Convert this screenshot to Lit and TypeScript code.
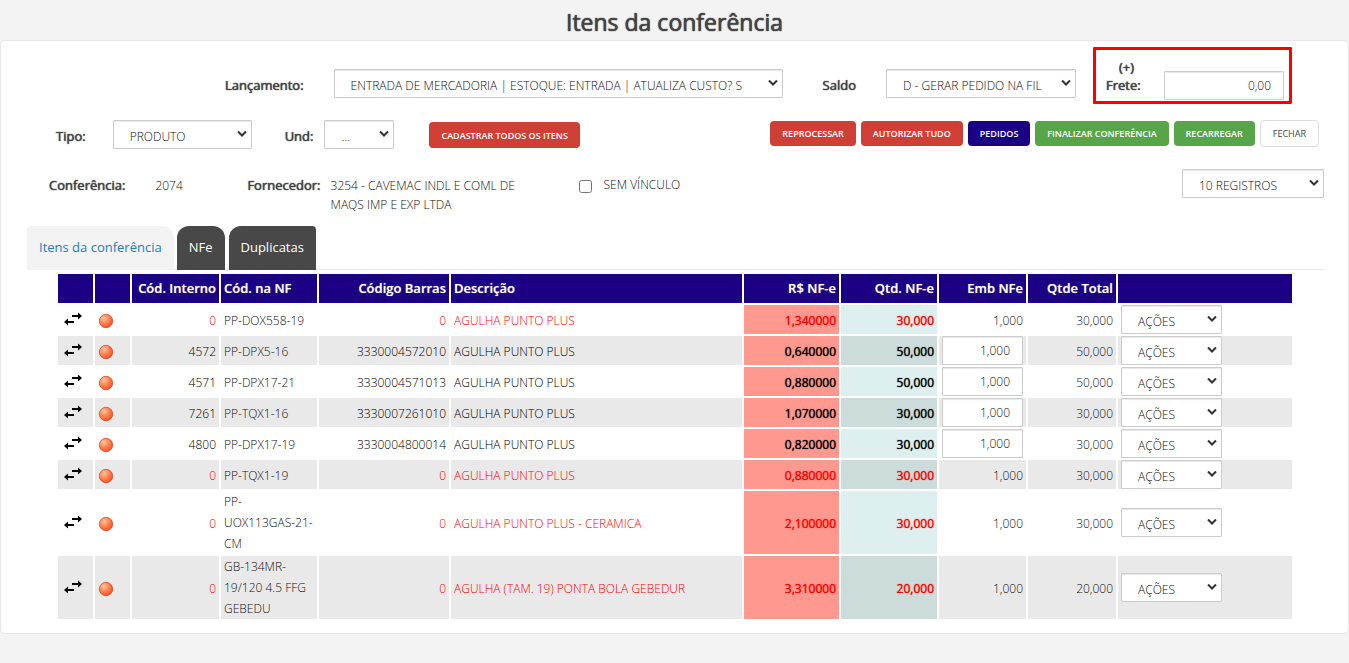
import { LitElement, html, css, svg } from "lit";
import { customElement } from "lit/decorators.js";
import { classMap } from "lit/directives/class-map.js";

interface Item {
  code: string;
  ref: string;
  barcode: string;
  name: string;
  price: string;
  qty: string;
  pack: string;
  editable: boolean;
  total: string;
}

const item = (
  code: string, ref: string, barcode: string, name: string,
  price: string, qty: string, editable = false,
): Item => ({ code, ref, barcode, name, price, qty, pack: "1,000", editable, total: qty });

const ITEMS: Item[] = [
  item("0", "PP-DOX558-19", "0", "AGULHA PUNTO PLUS", "1,340000", "30,000"),
  item("4572", "PP-DPX5-16", "3330004572010", "AGULHA PUNTO PLUS", "0,640000", "50,000", true),
  item("4571", "PP-DPX17-21", "3330004571013", "AGULHA PUNTO PLUS", "0,880000", "50,000", true),
  item("7261", "PP-TQX1-16", "3330007261010", "AGULHA PUNTO PLUS", "1,070000", "30,000", true),
  item("4800", "PP-DPX17-19", "3330004800014", "AGULHA PUNTO PLUS", "0,820000", "30,000", true),
  item("0", "PP-TQX1-19", "0", "AGULHA PUNTO PLUS", "0,880000", "30,000"),
  item("0", "PP-\nUOX113GAS-21-\nCM", "0", "AGULHA PUNTO PLUS - CERAMICA", "2,100000", "30,000"),
  item("0", "GB-134MR-\n19/120 4.5 FFG\nGEBEDU", "0", "AGULHA (TAM. 19) PONTA BOLA GEBEDUR", "3,310000", "20,000"),
];

@customElement("app-root")
export class AppRoot extends LitElement {
  static styles = css`
    :host {
      display: block;
      min-height: 100vh;
      background: #f3f3f3;
      color: #111;
      font: 300 12px/21px "Open Sans", sans-serif;
    }
    * { box-sizing: border-box; }
    h1 {
      margin: 0;
      padding: 6px 0 2px;
      text-align: center;
      color: #444;
      font-size: 23px;
      line-height: 32px;
      font-weight: 400;
      text-shadow: 0 0 1px #444, 0 0 1px #444;
    }
    .panel {
      background: #fff;
      border: 1px solid #e7e7e7;
      border-radius: 5px;
      padding: 6px 24px 12px 26px;
    }
    .bold { color: #444; font-size: 13px; font-weight: 400; text-shadow: 0 0 1px #444, 0 0 1px #777; }
    select, input.box {
      appearance: none;
      height: 29px;
      border: 1px solid #ccc;
      border-radius: 1px;
      box-shadow: inset 0 1px 1px #e8e8e8;
      color: #111;
      background: #fff;
      font: inherit;
      margin: 0;
    }
    .pick { position: relative; display: block; }
    .pick select { display: block; width: 100%; padding: 4px 30px 0 16px; overflow: hidden; }
    .pick svg { position: absolute; right: 5px; top: 10px; pointer-events: none; }
    input.box { text-align: right; padding: 0 12px; }
    .row { display: flex; align-items: center; }
    .top { height: 57px; margin-left: 198px; align-items: flex-start; }
    .top label { margin-top: 28px; }
    .top .pick { margin-top: 22px; }
    .launch { width: 449px; margin-left: 30px; }
    .saldo { margin-left: 40px; }
    .branch { width: 190px; margin-left: 30px; }
    .freight {
      display: flex;
      width: 199px;
      height: 57px;
      margin-left: 17px;
      border: 3px solid #f00;
      border-radius: 1px;
      padding: 0 5px 0 10px;
      justify-content: space-between;
    }
    .freight label { display: flex; flex-direction: column; margin-top: 8px; line-height: 18px; width: 41px; }
    .freight label span:first-child { text-align: center; }
    .freight input { width: 120px; margin-top: 21px; }
    .filters { margin: 16px 5px 0 29px; align-items: flex-start; }
    .filters label { margin-top: 6px; }
    .type { width: 139px; margin-left: 27px; }
    .und { margin-left: 33px; }
    .unit { width: 70px; margin-left: 11px; }
    button {
      border: 0;
      border-radius: 4px;
      background: #d03f36;
      color: #fff;
      font: 600 9px/13px "Open Sans", sans-serif;
      padding: 6px 12px;
      height: 25px;
      margin-top: 1px;
      white-space: nowrap;
    }
    .register { margin: 2px 0 0 35px; height: 26px; }
    .actions { display: flex; gap: 5px; margin-left: auto; }
    .navy { background: #1b0085; }
    .green { background: #57a549; }
    .plain { background: #fff; color: #444; border: 1px solid #ddd; font-weight: 400; height: 27px; padding: 5px 12px; margin-top: 0; }
    .info { margin: 15px 0 0 22px; align-items: flex-start; height: 62px; }
    .info > span { margin-top: 11px; }
    .number { width: 92px; margin-left: 30px; }
    .info .supplier { width: 220px; margin-left: 10px; line-height: 19px; margin-top: 12px; }
    .check { display: flex; align-items: flex-start; margin: 10px 0 0 28px; }
    .check input { margin: 6px 12px 0 0; width: 13px; height: 13px; }
    .info .page { width: 142px; margin: 5px 0 0 auto; }
    .tabs { display: flex; gap: 4px; border-bottom: 1px solid #e8e8e8; }
    .tabs a {
      padding: 11px 12px;
      line-height: 21px;
      font-size: 13px;
      font-weight: 400;
      height: 44px;
      margin-bottom: -1px;
      border-radius: 12px 12px 0 0;
      background: #484848;
      color: #fff;
      text-decoration: none;
    }
    .tabs .active { background: #f3f3f3; color: #1b7fc4; border-top-left-radius: 4px; margin-right: -1px; }
    .tabs .last { border-top-right-radius: 4px; }
    .scroll { margin: 2px 30px 0 29px; }
    table { width: 100%; table-layout: fixed; border-collapse: separate; border-spacing: 2px; }
    th {
      background: #1b0085;
      color: #fff;
      height: 29px;
      padding: 0 3px;
      font-size: 13px;
      font-weight: 600;
      text-shadow: 0 0 1px #aaa;
      text-align: left;
      white-space: nowrap;
    }
    td { height: 29px; padding: 2px 3px 0; vertical-align: middle; }
    td.flush { padding-top: 0; }
    .num { text-align: right; }
    td .pick { width: 101px; }
    td .pick select { padding-top: 3px; }
    tbody tr:nth-child(even) td { background: #e9e9e9; }
    td svg { display: block; }
    td.ref { white-space: pre-line; }
    td.dark { color: #000; }
    tr.unlinked td.dark { color: #f00; }
    tbody td.strong { font-weight: 400; text-shadow: 0 0 1px currentColor; }
    tbody tr td.price, tbody tr:nth-child(even) td.price { background: #ff998f; }
    tbody td.qty { background: #ddefee; }
    tbody tr:nth-child(even) td.qty { background: #cbdcdb; }
    td input.box { display: block; width: 81px; padding: 0 12px; }
    .c-icon { width: 35px; }
    .c-code { width: 87px; }
    .c-ref { width: 96px; }
    .c-bar { width: 130px; }
    .c-price { width: 95px; }
    .c-qty { width: 96px; }
    .c-pack { width: 87px; }
    .c-total { width: 88px; }
    .c-act { width: 174px; }
  `;

  private select(id: string, text: string, label = "") {
    return html`<select id=${id} aria-label=${label || text}><option>${text}</option></select>
      <svg width="10" height="8" viewBox="0 0 10 8" fill="none" stroke="#333" stroke-width="2"><path d="M1 1.500 5 5.500 9 1.500" /></svg>`;
  }

  private row(r: Item, i: number) {
    return html`<tr class=${classMap({ unlinked: r.code === "0" })}>
      <td class="flush"><svg width="24" height="18" viewBox="0 0 24 18" fill="#000"><path d="M11 4H17V1.500l4 3.500-4 3.500V6H11zM13 10H7V7.500L3 11l4 3.500V12H13z" /></svg></td>
      <td>${this.ball(i)}</td>
      <td class="num dark">${r.code}</td>
      <td class=${classMap({ ref: true, flush: r.ref.includes("\n") })}>${r.ref}</td>
      <td class="num dark">${r.barcode}</td>
      <td class="dark">${r.name}</td>
      <td class="num dark strong price">${r.price}</td>
      <td class="num dark strong qty">${r.qty}</td>
      <td class=${classMap({ num: true, flush: r.editable })}>${r.editable ? html`<input class="box" aria-label="Emb NFe" .value=${r.pack} />` : r.pack}</td>
      <td class="num">${r.total}</td>
      <td class="flush"><span class="pick">${this.select(`acoes-${i}`, "AÇÕES")}</span></td>
    </tr>`;
  }

  private ball(i: number) {
    return html`<svg width="16" height="16" viewBox="0 0 16 16">${svg`
      <defs><radialGradient id="ball-${i}" cx="35%" cy="30%" r="75%">
        <stop offset="0" stop-color="#ffc9a0" /><stop offset=".5" stop-color="#ff8454" /><stop offset="1" stop-color="#fa4c22" />
      </radialGradient></defs>
      <circle cx="8" cy="8" r="6.700" fill="url(#ball-${i})" stroke="#d8492a" stroke-width=".8" />`}</svg>`;
  }

  render() {
    return html`
      <h1>Itens da conferência</h1>
      <main class="panel">
        <div class="row top">
          <label class="bold" for="lancamento">Lançamento:</label>
          <span class="pick launch">${this.select("lancamento", "ENTRADA DE MERCADORIA | ESTOQUE: ENTRADA | ATUALIZA CUSTO? S", "Lançamento")}</span>
          <label class="bold saldo" for="saldo">Saldo</label>
          <span class="pick branch">${this.select("saldo", "D - GERAR PEDIDO NA FIL", "Saldo")}</span>
          <div class="freight">
            <label class="bold" for="frete"><span>(+)</span> <span>Frete:</span></label>
            <input class="box" id="frete" value="0,00" />
          </div>
        </div>
        <div class="row filters">
          <label class="bold" for="tipo">Tipo:</label>
          <span class="pick type">${this.select("tipo", "PRODUTO", "Tipo")}</span>
          <label class="bold und" for="und">Und:</label>
          <span class="pick unit">${this.select("und", "...", "Und")}</span>
          <button class="register">CADASTRAR TODOS OS ITENS</button>
          <div class="actions">
            <button>REPROCESSAR</button>
            <button>AUTORIZAR TUDO</button>
            <button class="navy">PEDIDOS</button>
            <button class="green">FINALIZAR CONFERÊNCIA</button>
            <button class="green">RECARREGAR</button>
            <button class="plain">FECHAR</button>
          </div>
        </div>
        <div class="row info">
          <span class="bold">Conferência:</span>
          <span class="number">2074</span>
          <span class="bold">Fornecedor:</span>
          <span class="supplier">3254 - CAVEMAC INDL E COML DE MAQS IMP E EXP LTDA</span>
          <label class="check"><input type="checkbox" />SEM VÍNCULO</label>
          <span class="pick page">${this.select("registros", "10 REGISTROS")}</span>
        </div>
        <nav class="tabs">
          <a class="active" href="#itens">Itens da conferência</a>
          <a href="#nfe">NFe</a>
          <a class="last" href="#duplicatas">Duplicatas</a>
        </nav>
        <div class="scroll">
          <table>
            <colgroup>
              <col class="c-icon" /><col class="c-icon" /><col class="c-code" /><col class="c-ref" /><col class="c-bar" /><col />
              <col class="c-price" /><col class="c-qty" /><col class="c-pack" /><col class="c-total" /><col class="c-act" />
            </colgroup>
            <thead><tr>
              <th></th><th></th><th class="num">Cód. Interno</th><th>Cód. na NF</th><th class="num">Código Barras</th><th>Descrição</th>
              <th class="num">R$ NF-e</th><th class="num">Qtd. NF-e</th><th class="num">Emb NFe</th><th class="num">Qtde Total</th><th></th>
            </tr></thead>
            <tbody>${ITEMS.map((r, i) => this.row(r, i))}</tbody>
          </table>
        </div>
      </main>`;
  }
}
